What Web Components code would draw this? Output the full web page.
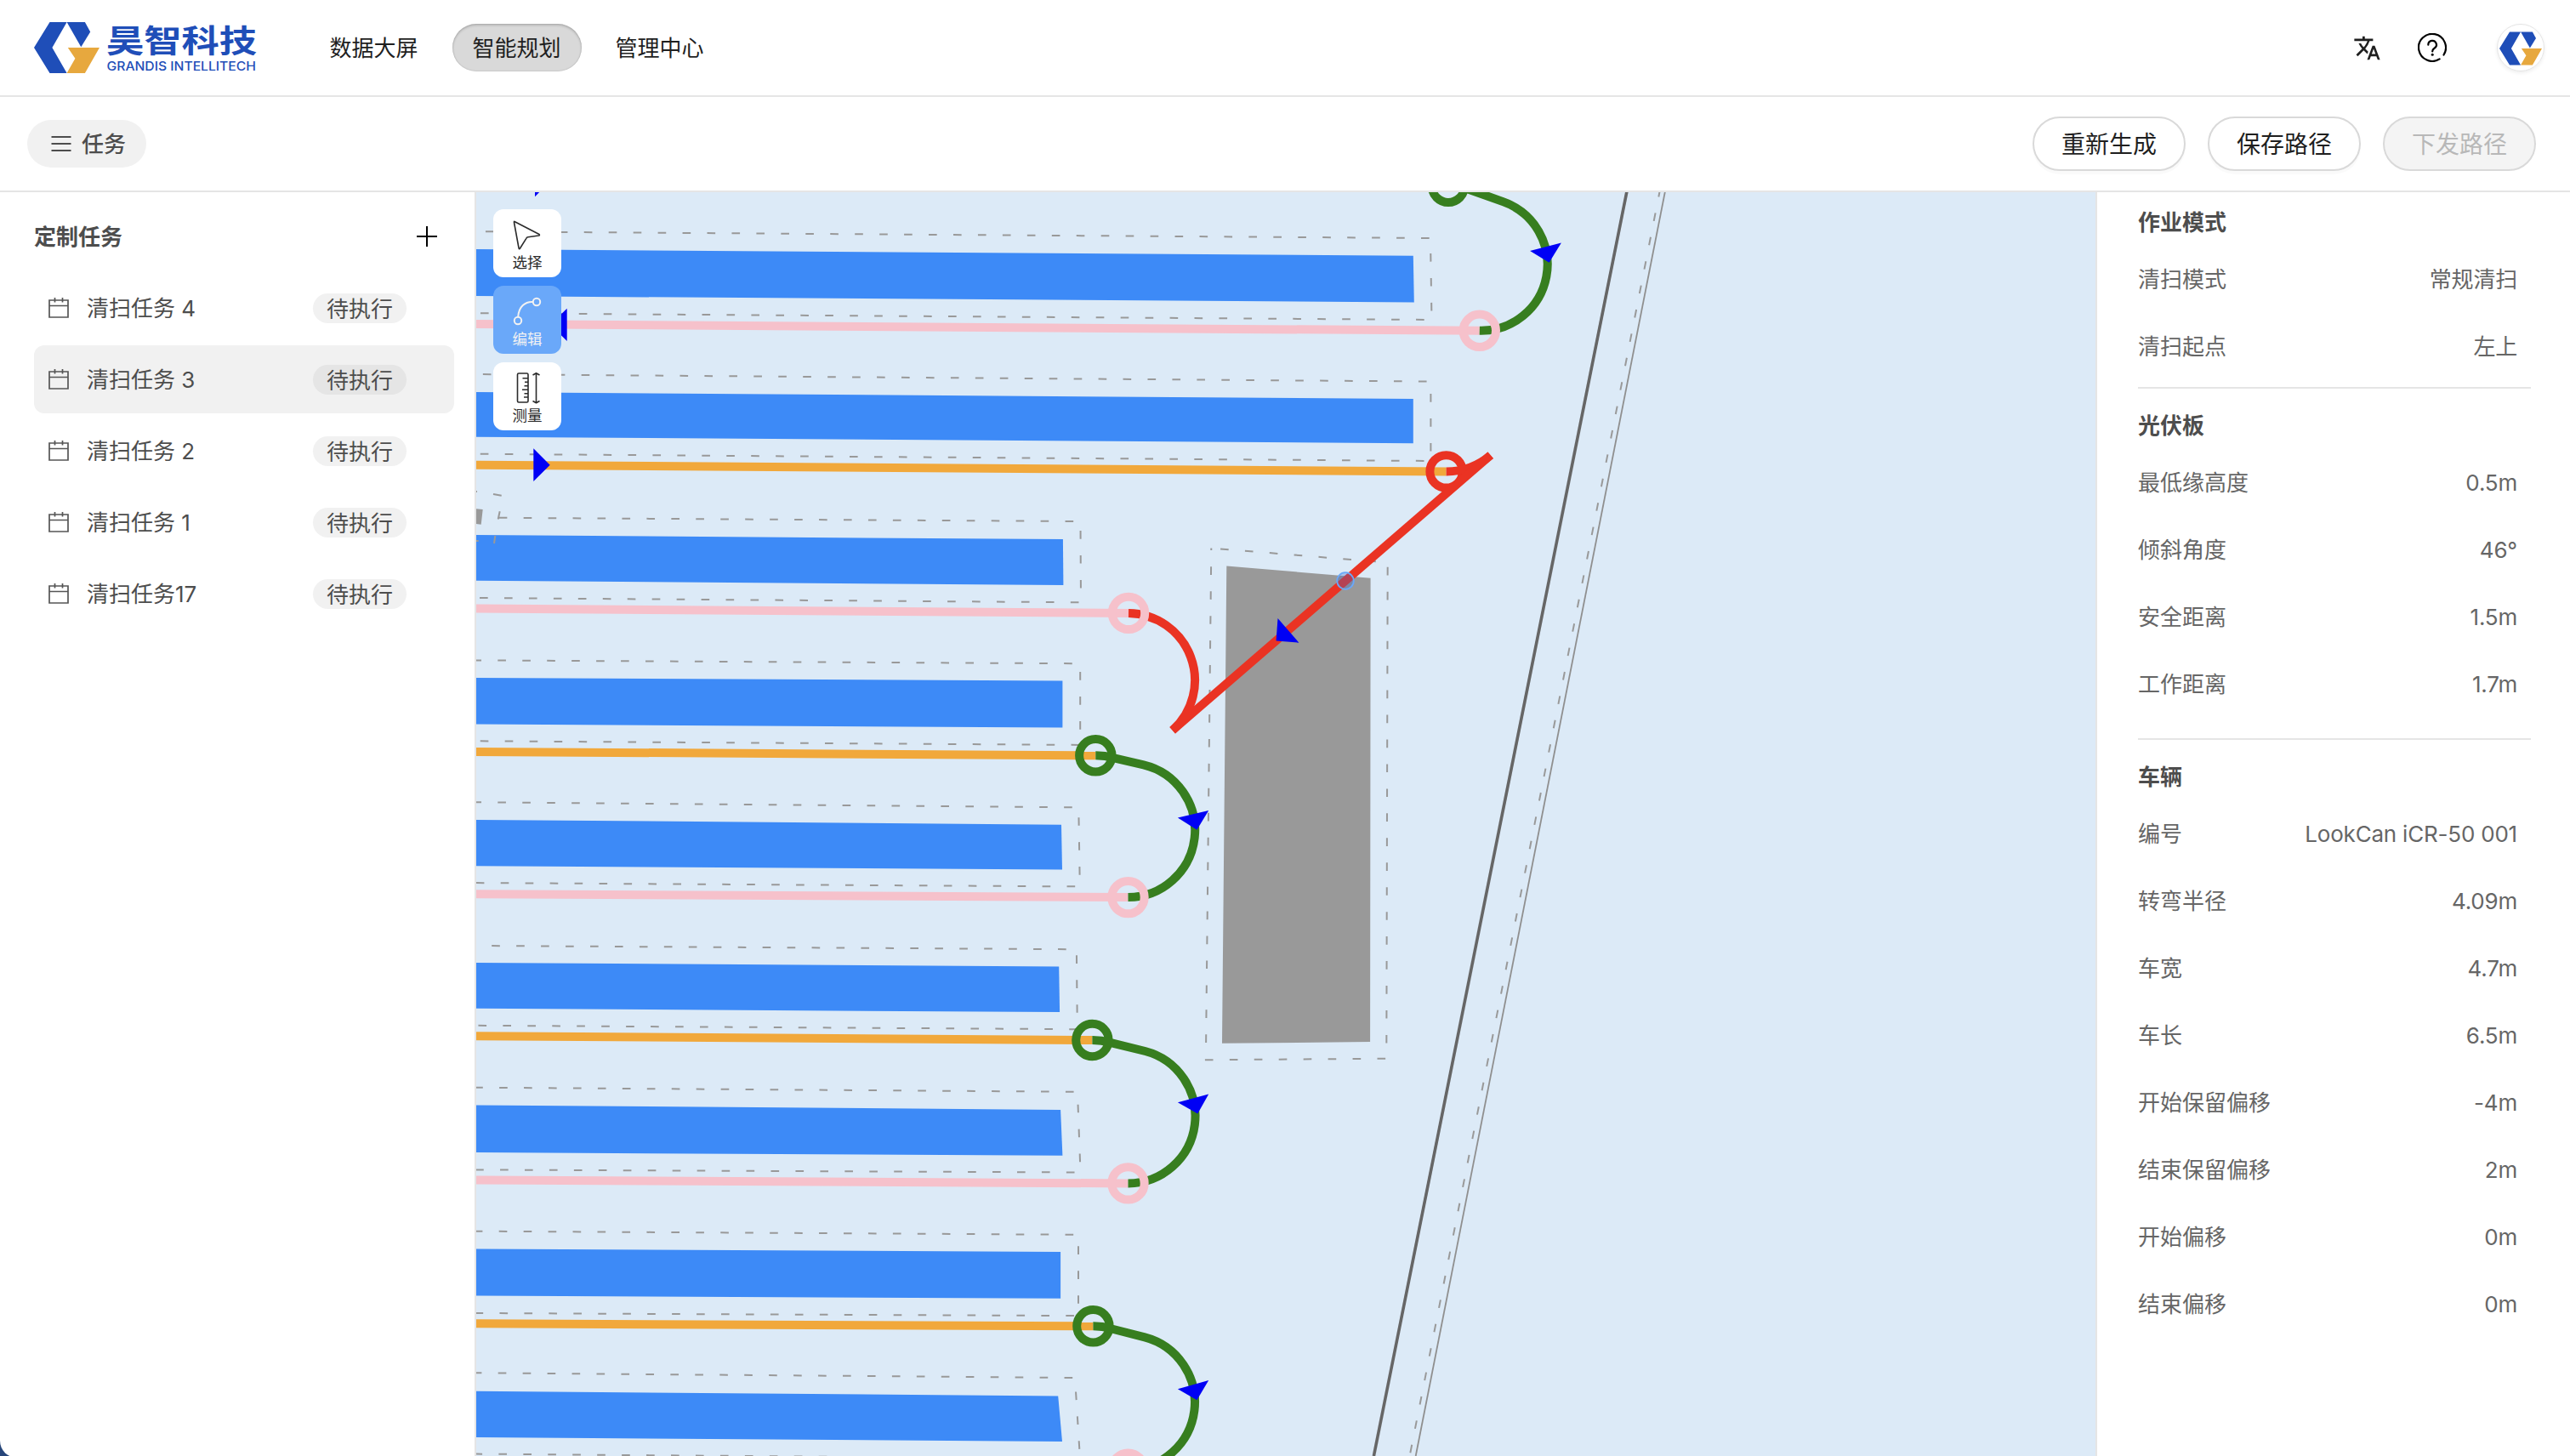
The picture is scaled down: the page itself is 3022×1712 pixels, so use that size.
<!DOCTYPE html>
<html lang="zh-CN">
<head>
<meta charset="utf-8">
<title>智能规划</title>
<style>
  html, body { margin: 0; height: 100%; overflow: hidden; background: #27467a; }
  body { font-family: Inter, "Noto Sans CJK SC", "Liberation Sans", sans-serif; font-size: 26px; line-height: 36px; color: #4d4d4d; }
</style>
</head>
<body>
<planner-app></planner-app>
<script>
const define = (name, html, setup) => {
  const template = document.createElement('template');
  template.innerHTML = html;
  customElements.define(name, class extends HTMLElement {
    constructor() {
      super();
      this.attachShadow({ mode: 'open' }).append(template.content.cloneNode(true));
    }
    connectedCallback() {
      if (setup && !this.ready) { this.ready = true; setup(this, this.shadowRoot); }
    }
  });
};

/* ---------- brand ---------- */
define('brand-mark', `
  <style>:host{display:block;width:77px;height:60px}svg{display:block;width:100%;height:100%}</style>
  <svg viewBox="0 0 77 60">
    <path fill="#1f4eb8" d="M18.5 0H38.6L21.4 30L38.6 60H18.5L0 30Z"/>
    <path fill="#1f4eb8" d="M38.6 0H59.9L66.2 11.5L55.3 29.3Z"/>
    <path fill="#e7a83e" d="M39.8 30H77L59.9 60H38.6L48.4 42.7Z"/>
  </svg>`);

define('brand-logo', `
  <style>
    :host{display:flex;align-items:center;gap:8px;height:60px}
    svg{display:block;width:177px;height:60px;overflow:visible}
  </style>
  <brand-mark></brand-mark>
  <svg viewBox="0 0 177 60" fill="#1f4eb8">
    <text x="0" y="35.500" font-size="37" font-weight="700" font-family="'Noto Sans CJK SC', sans-serif" textLength="177" lengthAdjust="spacingAndGlyphs">昊智科技</text>
    <text x="0.5" y="56.500" font-size="14.500" font-weight="500" font-family="Inter, sans-serif" textLength="175.5" lengthAdjust="spacingAndGlyphs">GRANDIS INTELLITECH</text>
  </svg>`);

/* ---------- header ---------- */
define('nav-item', `
  <style>
    :host{display:flex;align-items:center;justify-content:center;box-sizing:border-box;width:152px;height:56px;padding:2px 1px 0 0;border-radius:28px;color:#1f1f1f}
    :host([active]){background:#d9d9d9;box-shadow:inset 0 2px 3px rgba(0,0,0,.16),inset 0 0 2px rgba(0,0,0,.2)}
  </style><slot></slot>`);

define('app-header', `
  <style>
    :host{display:flex;align-items:center;height:112px;padding:0 30px 0 40px;border-bottom:2px solid #e5e5e5;flex:none}
    nav{display:flex;gap:16px;margin-left:62px}
    .actions{display:flex;align-items:center;margin-left:auto}
    svg{display:block}
    .help{margin-left:43px}
    .avatar{display:flex;align-items:center;justify-content:center;box-sizing:border-box;width:56px;height:56px;margin-left:59px;border-radius:50%;border:1px solid #e4e4e4;box-shadow:0 2px 4px rgba(0,0,0,.07)}
    .avatar brand-mark{width:50px;height:40px;margin-top:2px}
  </style>
  <brand-logo></brand-logo>
  <nav><nav-item>数据大屏</nav-item><nav-item active>智能规划</nav-item><nav-item>管理中心</nav-item></nav>
  <div class="actions">
    <svg width="33" height="33" viewBox="0 0 24 24" fill="#1f1f1f"><path d="M12.87 15.07l-2.54-2.51.03-.03A17.5 17.5 0 0 0 14.07 6H17V4h-7V2H8v2H1v1.99h11.17C11.5 7.92 10.44 9.75 9 11.35 8.07 10.32 7.3 9.19 6.69 8h-2c.73 1.63 1.73 3.17 2.98 4.56l-5.09 5.02L4 19l5-5 3.11 3.11.76-2.04zM18.5 10h-2L12 22h2l1.12-3h4.75L21 22h2l-4.5-12zm-2.62 7l1.62-4.33L19.12 17h-3.24z"/></svg>
    <svg class="help" width="34" height="34" viewBox="0 0 34 34" fill="none" stroke="#000" stroke-width="2.2" stroke-linecap="round"><path d="M30.5 25.5A16 16 0 1 0 25.6 30.4"/><path d="M12.3 13.7a4.8 4.8 0 1 1 7.2 4.1c-1.7 1-2.3 1.800-2.3 3.600"/><circle cx="17.200" cy="25.200" r="1.500" fill="#000" stroke="none"/></svg>
    <div class="avatar"><brand-mark></brand-mark></div>
  </div>`);

/* ---------- toolbar ---------- */
define('pill-button', `
  <style>
    :host{display:flex;align-items:center;justify-content:center;box-sizing:border-box;width:180px;height:64px;padding-top:1px;border:2px solid #d9d9d9;border-radius:32px;background:#fff;color:#1f1f1f;font-size:28px;box-shadow:0 4px 0 rgba(0,0,0,.02)}
    :host([disabled]){background:#f4f4f4;color:#b8b8b8;box-shadow:none}
  </style><slot></slot>`);

define('app-toolbar', `
  <style>
    :host{display:flex;align-items:center;height:110px;padding:0 40px 0 32px;border-bottom:2px solid #e5e5e5;flex:none}
    .menu{display:flex;align-items:center;box-sizing:border-box;gap:12px;width:140px;height:56px;padding-left:28px;border-radius:28px;background:#f1f1f1;font-weight:500}
    .menu span{padding-top:2px}
    .buttons{display:flex;gap:26px;margin-left:auto}
  </style>
  <div class="menu"><svg width="24" height="24" viewBox="0 0 24 24" stroke="#4d4d4d" stroke-width="2"><path d="M0.500 4H23.500M0.500 12H23.500M0.500 20H23.500"/></svg><span>任务</span></div>
  <div class="buttons"><pill-button>重新生成</pill-button><pill-button>保存路径</pill-button><pill-button disabled>下发路径</pill-button></div>`);

/* ---------- task list ---------- */
define('task-item', `
  <style>
    :host{display:flex;align-items:center;box-sizing:border-box;height:80px;padding:0 56px 0 17px;border-radius:12px}
    :host([selected]){background:#f1f1f1}
    svg{flex:none;margin-right:21px}
    .name{padding-top:2px}
    .badge{display:flex;align-items:center;justify-content:center;box-sizing:border-box;width:110px;height:35px;padding-top:2px;margin:1px 0 0 auto;border-radius:18px;background:#f1f1f1}
    :host([selected]) .badge{background:#e5e5e5}
  </style>
  <svg width="24" height="26" viewBox="0 0 24 26" fill="none" stroke="#555" stroke-width="1.700"><path d="M1 4H23V24H1ZM1 10.500H23M7.500 1V6.500M16.500 1V6.500"/></svg>
  <span class="name"><slot></slot></span><span class="badge">待执行</span>`);

define('task-list', `
  <style>
    :host{display:flex;flex-direction:column;box-sizing:border-box;width:560px;padding:0 24px 0 40px;border-right:2px solid #e5e5e5;flex:none}
    header{display:flex;align-items:center;justify-content:space-between;height:96px;padding:8px 20px 0 0;box-sizing:border-box;font-weight:700}
    header span{padding-top:1px}
    .items{display:flex;flex-direction:column;gap:4px}
  </style>
  <header><span>定制任务</span><svg width="24" height="24" viewBox="0 0 24 24" stroke="#000" stroke-width="2"><path d="M0 12H24M12 0V24"/></svg></header>
  <div class="items"><slot></slot></div>`);

/* ---------- map tools ---------- */
const toolIcons = {
  select: '<path d="M5 4.500L34 19.500Q35 20.500 33.500 21L21 22.800Q19.500 23 18.800 24.300L11.500 36Q10.500 37.500 10 35.500L4.500 5.500Q4.300 4 5 4.500Z"/>',
  edit: '<g stroke-width="2"><circle cx="31" cy="9" r="4.200"/><circle cx="9" cy="31" r="4.200"/><path d="M9.200 26.500C10 14.500 17.500 8.500 26.500 9"/></g>',
  measure: '<rect x="8.500" y="3" width="12.500" height="34" rx="1.500"/><path d="M14.500 8.800H21M17 13.300H21M16.500 17.800H21M14 22.300H21M16.500 26.800H21M16 31H21M30.500 3.500V37M26.500 5L30.500 2.800L34.500 5M26.500 35.500L30.500 37.700L34.500 35.500"/>'
};
define('tool-button', `
  <style>
    :host{display:flex;flex-direction:column;align-items:center;width:80px;height:80px;border-radius:12px;background:#fff;color:#2b2b2b;font-size:17.500px;line-height:25px}
    :host([active]){background:#6aa8f9;color:#f2f2f2}
    svg{display:block;width:40px;height:40px;margin:10px 0 0;flex:none}
  </style>
  <svg viewBox="0 0 40 40" fill="none" stroke="currentColor" stroke-width="1.600" stroke-linejoin="round"></svg>
  <span><slot></slot></span>`, (el, root) => {
  root.querySelector('svg').innerHTML = toolIcons[el.getAttribute('icon')];
});

/* ---------- map ---------- */
/* Each row: panel [left top y, top-right, bottom-right, left bottom y],
   safety outline in the same order, and the x where its last top dash ends. */
const rows = [
  [[293, 1661.8, 300.8, 1662.8, 355.500, 348], [272.2, 1682, 280, 1683.500, 376, 368.2], 1680.7],
  [[461, 1661.8, 469.1, 1661.8, 521.3, 513.7], [440, 1682.4, 448.6, 1682.4, 542, 533.7], 1677.6],
  [[629.1, 1249.9, 634.1, 1250.4, 688, 682.7], [608.8, 1270.500, 613, 1271, 708.3, 703], 1262.2],
  [[797.1, 1249.4, 800.500, 1249.4, 855.6, 851.4], [776.4, 1270.2, 780.2, 1270.2, 875.9, 871.3], 1260.8],
  [[963.9, 1248, 969.7, 1249, 1022.500, 1018.2], [943.2, 1268.3, 949.4, 1269.8, 1042.4, 1038.1], 1260.8],
  [[1131.9, 1245.2, 1136.500, 1246.1, 1190.1, 1185.8], [1112, 1265.9, 1116.2, 1266.8, 1210.2, 1205.8], 1253.7],
  [[1299.4, 1247.1, 1304.9, 1249.4, 1358.8, 1355.1], [1278.7, 1267, 1283.8, 1270.500, 1378.500, 1375.4], 1262.6],
  [[1468.4, 1247.1, 1472.1, 1247.1, 1526.8, 1523.4], [1447.7, 1268, 1451.8, 1268, 1547.1, 1544], 1262.2],
  [[1635.7, 1244.2, 1641.4, 1249, 1695, 1690], [1614.3, 1264, 1620, 1270, 1715, 1709.6], 1261.2]
];
const sweeps = [
  ['pink', 381, 1739.8, 388.8], ['orange', 546.7, 1700.6, 554.4], ['pink', 715.6, 1327, 720.9],
  ['orange', 883.9, 1288.3, 888.3], ['pink', 1051.2, 1326.500, 1055.1], ['orange', 1218.3, 1284.4, 1223],
  ['pink', 1387.6, 1326.500, 1391.4], ['orange', 1556.3, 1285.4, 1559.3], ['pink', 1724, 1326.500, 1727.7]
];
/* U-turns: start, knee, end, turning radius, arrow */
const turns = [
  [1703, 218.8, 1768, 237.4, 1739.8, 388.8, 78, '1799.1,295 1835.9,285.6 1821.6,308.8'],
  [1288.3, 888.3, 1344.7, 899.3, 1326.500, 1055.1, 79, '1384.9,961.6 1421.2,952.9 1407.4,975.7'],
  [1284.4, 1223, 1346.6, 1236, 1326.500, 1391.4, 79, '1384.9,1296.3 1421.2,1286.500 1408.3,1309.4'],
  [1285.4, 1559.3, 1346.1, 1572.3, 1326.500, 1727.7, 79, '1384.9,1633.2 1421.2,1622.9 1407.4,1646.2']
];
const DASH = 9.65, PERIOD = 28.95, LEFT = 560;
const stroke = { pink: '#f6c1cb', orange: '#f1a83b', green: '#377e1f', red: '#ea3323' };

define('map-view', `
  <style>
    :host{display:block;position:relative;flex:1;min-width:0;overflow:hidden;background:#dceaf7}
    svg.map{display:block;width:1904px;height:1486px}
    .tools{position:absolute;left:20px;top:20px;display:flex;flex-direction:column;gap:10px}
  </style>
  <svg class="map" viewBox="560 226 1904 1486"></svg>
  <div class="tools"><slot></slot></div>`, (el, root) => {
  const out = [];
  const ring = (x, y, c) => out.push(`<circle cx="${x}" cy="${y}" r="19.200" fill="none" stroke="${stroke[c]}" stroke-width="10"/>`);
  const line = (d, c) => out.push(`<path d="${d}" fill="none" stroke="${stroke[c]}" stroke-width="10"/>`);
  const arrow = p => out.push(`<polygon points="${p}" fill="#0000f5"/>`);

  for (const [p] of rows)
    out.push(`<path fill="#3d8af7" d="M${LEFT} ${p[0]}L${p[1]} ${p[2]}L${p[3]} ${p[4]}L${LEFT} ${p[5]}Z"/>`);
  out.push('<path fill="#999" d="M1442.3 665.500L1611.6 679.8L1611.1 1225.1L1437 1226.8ZM560 598.3L567.7 599L565.7 616.7L560 616Z"/>');

  out.push(`<g fill="none" stroke="#999" stroke-width="2">`);
  rows.forEach(([, g, xe], i) => {
    const x0 = i === 2 ? 586 : LEFT;
    const off = (DASH - (xe - x0) % PERIOD + PERIOD) % PERIOD;
    out.push(`<path stroke-dasharray="${DASH} ${PERIOD - DASH}" stroke-dashoffset="${off}" d="M${x0} ${g[0]}L${g[1]} ${g[2]}L${g[3]} ${g[4]}L${LEFT} ${g[5]}"/>`);
  });
  out.push(`<path stroke-dasharray="${DASH} ${PERIOD - DASH}" stroke-dashoffset="18.150" d="M1424.3 644.500L1631.7 661.500L1630.3 1244.7L1417.9 1246.3L1424.3 644.500"/>
    <path d="M580 581L589.7 582.7M587.7 601.3L585.7 610.500M582.3 630L581 639M560 636H562.7M560 578H561"/>
    <path stroke-dasharray="${DASH} ${PERIOD - DASH}" d="M1952.2 222L1657.6 1712"/>
    <path stroke="#8f8f8f" stroke-width="1.800" d="M1957.9 225.4L1664.7 1712"/>
    <path stroke="#666" stroke-width="3.600" d="M1912.9 225.4L1615.4 1712"/></g>`);

  for (const [c, y, xe, ye] of sweeps) line(`M${LEFT} ${y}L${xe} ${ye}`, c);

  for (const [x, y, kx, ky, ex, ey, r] of turns) {
    ring(x, y, 'green');
    line(`M${x} ${y}Q${x + 11} ${y} ${x + 22} ${y + 3.200}L${kx} ${ky}A${r} ${r} 0 0 1 ${ex} ${ey}`, 'green');
    ring(ex, ey, 'pink');
  }
  ring(1700.6, 554.4, 'red');
  line('M1700.600 554.400A80 80 0 0 0 1752.700 535.200', 'red');
  line('M1752.700 535.200L1378.700 858.800', 'red');
  line('M1378.700 858.800A79 79 0 0 0 1327 720.900', 'red');
  ring(1327, 720.9, 'pink');

  turns.forEach(t => arrow(t[7]));
  arrow('1502.500,727.100 1527.400,755.700 1500.600,753.500');
  arrow('627.300,527.300 646.700,546.700 627.300,566');
  arrow('666.700,362.700 666.700,401 647.300,381.800');
  arrow('629,192.400 648.400,211.800 629,231.200');
  out.push('<circle cx="1582" cy="683" r="9.800" fill="rgba(61,100,200,.3)" stroke="#6aa8f9" stroke-width="1.800"/>');
  root.querySelector('svg').innerHTML = out.join('');
});

/* ---------- info panel ---------- */
define('info-row', `
  <style>
    :host{display:flex;align-items:center;justify-content:space-between;height:79px;padding-right:16px;color:#666}
    .value{letter-spacing:-.2px}
  </style><span><slot name="label"></slot></span><span class="value"><slot></slot></span>`);

define('info-section', `
  <style>
    :host{display:block;padding-bottom:8px;border-bottom:2px solid #e5e5e5;margin-bottom:17px}
    :host([roomy]){padding-bottom:24px}
    :host([last]){border:0;margin:0}
    h2{display:flex;align-items:center;height:54px;margin:0;font-size:26px;font-weight:700}
  </style><h2></h2><slot></slot>`, (el, root) => {
  root.querySelector('h2').textContent = el.getAttribute('heading');
});

define('info-panel', `
  <style>
    :host{display:block;box-sizing:border-box;width:558px;padding:9px 46px 0 48px;border-left:2px solid #e5e5e5;flex:none}
  </style><slot></slot>`);

/* ---------- application ---------- */
const row = (label, value) => `<info-row><span slot="label">${label}</span>${value}</info-row>`;
define('planner-app', `
  <style>
    :host{display:flex;flex-direction:column;height:1714px;background:#fff;border-bottom-left-radius:20px;overflow:hidden}
    main{display:flex;flex:1;min-height:0}
  </style>
  <app-header></app-header>
  <app-toolbar></app-toolbar>
  <main>
    <task-list>
      <task-item>清扫任务 4</task-item>
      <task-item selected>清扫任务 3</task-item>
      <task-item>清扫任务 2</task-item>
      <task-item>清扫任务 1</task-item>
      <task-item>清扫任务17</task-item>
    </task-list>
    <map-view>
      <tool-button icon="select">选择</tool-button>
      <tool-button icon="edit" active>编辑</tool-button>
      <tool-button icon="measure">测量</tool-button>
    </map-view>
    <info-panel>
      <info-section heading="作业模式">${row('清扫模式', '常规清扫')}${row('清扫起点', '左上')}</info-section>
      <info-section heading="光伏板" roomy>${row('最低缘高度', '0.5m')}${row('倾斜角度', '46°')}${row('安全距离', '1.5m')}${row('工作距离', '1.7m')}</info-section>
      <info-section heading="车辆" last>${row('编号', 'LookCan iCR-50 001')}${row('转弯半径', '4.09m')}${row('车宽', '4.7m')}${row('车长', '6.5m')}${row('开始保留偏移', '-4m')}${row('结束保留偏移', '2m')}${row('开始偏移', '0m')}${row('结束偏移', '0m')}</info-section>
    </info-panel>
  </main>`);
</script>
</body>
</html>
